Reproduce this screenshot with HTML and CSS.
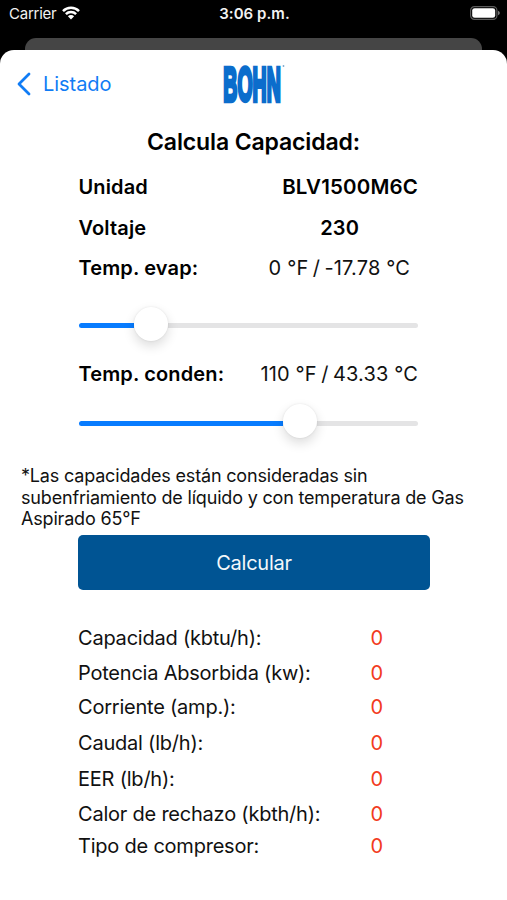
FILE: index.html
```html
<!DOCTYPE html>
<html lang="es">
<head>
<meta charset="utf-8">
<title>Calcula Capacidad</title>
<link rel="stylesheet" href="styles.css">
</head>
<body>
<header class="status">
  <div class="carrier"><span>Carrier</span>
    <svg width="18" height="14" viewBox="0 0 18 14" fill="none" stroke="#fff" stroke-width="2.5"><path d="M1 5.1a11.3 11.3 0 0 1 16 0"/><path d="M3.9 8.2a7.2 7.2 0 0 1 10.2 0"/><path d="M9 13.5 5.9 10.3a4.4 4.4 0 0 1 6.2 0Z" fill="#fff" stroke="none"/></svg>
  </div>
  <div class="time">3:06 p.m.</div>
  <svg class="battery" width="30" height="14" viewBox="0 0 30 14"><rect x=".6" y=".6" width="26.3" height="12.8" rx="3.8" fill="none" stroke="#5c5c5c" stroke-width="1.2"/><rect x="2.2" y="2.2" width="23" height="9.6" rx="2.4" fill="#fff"/><path d="M28 4.7q1.9.7 1.9 2.3T28 9.3Z" fill="#777"/></svg>
</header>
<div class="behind"></div>
<main class="sheet">
  <nav class="nav">
    <a class="back"><svg width="15" height="24" viewBox="0 0 15 24" fill="none" stroke="#107cf5" stroke-width="2.8" stroke-linecap="round" stroke-linejoin="round"><path d="M13 2 3 12l10 10"/></svg><span>Listado</span></a>
    <svg class="logo" width="66" height="64" viewBox="0 -10 66 64"><text class="wordmark" transform="translate(2.3 39.4) scale(.5 1.22)" x="0" y="0" textLength="115" lengthAdjust="spacingAndGlyphs">BOHN</text><circle cx="62.5" cy="4" r=".9" fill="#7da9cf"/></svg>
  </nav>
  <h1 class="title">Calcula Capacidad:</h1>
  <section class="specs">
    <div class="row unit"><b>Unidad</b><b class="value">BLV1500M6C</b></div>
    <div class="row volt"><b>Voltaje</b><b class="value">230</b></div>
    <div class="row evap"><b>Temp. evap:</b><span class="value">0 °F<i> / </i>-17.78 °C</span></div>
    <div class="slider low"><div class="fill"></div><div class="knob"></div><div class="rest"></div></div>
    <div class="row cond"><b>Temp. conden:</b><span class="value">110 °F<i> / </i>43.33 °C</span></div>
    <div class="slider high"><div class="fill"></div><div class="knob"></div><div class="rest"></div></div>
  </section>
  <p class="note">*Las capacidades están consideradas sin<br>subenfriamiento de líquido y con temperatura de Gas<br>Aspirado 65°F</p>
  <button class="calc">Calcular</button>
  <section class="results">
    <span>Capacidad (kbtu/h):</span><output>0</output>
    <span>Potencia Absorbida (kw):</span><output>0</output>
    <span>Corriente (amp.):</span><output>0</output>
    <span>Caudal (lb/h):</span><output>0</output>
    <span>EER (lb/h):</span><output>0</output>
    <span>Calor de rechazo (kbth/h):</span><output>0</output>
    <span>Tipo de compresor:</span><output>0</output>
  </section>
</main>
</body>
</html>
```
FILE: styles.css
```css
* { box-sizing: border-box; }
body { margin: 0; height: 900px; overflow: hidden; background: #000; color: #111; font: 20px/24px Inter, sans-serif; display: flex; flex-direction: column; }
.status { height: 38px; padding: 0 7px 0 9px; display: grid; grid-template-columns: 1fr auto 1fr; align-items: start; color: #f2f2f2; font-size: 15px; line-height: 28px; }
.carrier { display: flex; gap: 6px; letter-spacing: -.25px; }
.carrier svg { margin-top: 6px; }
.time { font-weight: 600; letter-spacing: .05px; }
.battery { justify-self: end; margin-top: 6px; }
.behind { height: 12px; margin: 0 25px; background: #454545; border-radius: 11px 11px 0 0; flex: none; }
.sheet { flex: 1; background: #fff; border-radius: 14px 14px 0 0; }
.nav { height: 68px; display: grid; grid-template-columns: 221px 66px; align-items: center; }
.back { display: flex; align-items: center; gap: 12px; padding-left: 16px; color: #107cf5; letter-spacing: -.05px; }
.logo { overflow: visible; }
.wordmark { font: bold 40px "Liberation Sans", sans-serif; fill: #0b6dcc; stroke: #0b6dcc; stroke-width: 3.6px; }
.title { margin: 8px 0 0; font-size: 23px; line-height: 32px; font-weight: 600; letter-spacing: -.13px; text-align: center; color: #000; }
b { font-weight: 600; color: #000; letter-spacing: .13px; }
.specs { margin: 0 89px 0 78.5px; }
.row { display: flex; justify-content: space-between; align-items: center; white-space: nowrap; }
.unit { height: 58px; }
.unit .value { font-size: 20.5px; letter-spacing: .16px; }
.volt { height: 24px; }
.evap { height: 56px; }
.cond { height: 64px; }
.volt .value { margin-right: 59px; }
.evap .value { margin-right: 8px; }
.row span { letter-spacing: .15px; }
.row i { font-style: normal; word-spacing: -1.4px; }
.slider { height: 34px; display: flex; align-items: center; }
.low { margin-top: 12px; }
.fill { height: 5px; background: #087cff; border-radius: 3px 0 0 3px; }
.rest { flex: 1; height: 5px; background: #e4e4e5; border-radius: 0 3px 3px 0; }
.knob { width: 34px; height: 34px; border-radius: 50%; background: #fff; box-shadow: 0 5px 12px rgba(0,0,0,.14), 0 0 2px rgba(0,0,0,.1); z-index: 1; margin-top: -2px; }
.high .knob { margin-top: -4px; }
.low .fill { width: 55px; }
.high .fill { width: 204px; }
.note { margin: 25px 0 0 21px; font-size: 18px; line-height: 21.7px; letter-spacing: -.18px; white-space: nowrap; }
.calc { display: block; margin: 5px 0 0 78px; width: 352px; height: 55px; padding: 0; border: 0; border-radius: 5px; background: #005493; color: #f4f8fb; font: 20px/24px Inter, sans-serif; letter-spacing: -.25px; }
.results { margin: 31px 0 0 78px; display: grid; grid-template-columns: 292.5px 30px; grid-template-rows: 34px 35px 33px 39px 34px 35px 29px; align-items: center; letter-spacing: -.22px; }
output { color: #f23a20; }
```
